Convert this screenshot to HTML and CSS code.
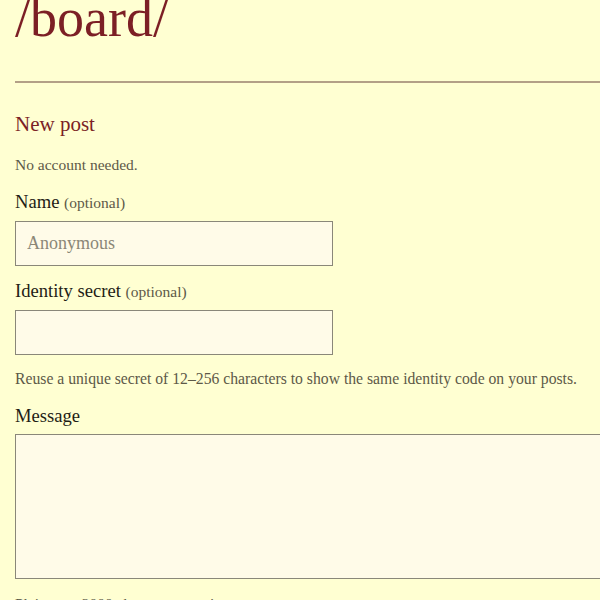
FILE: index.html
```html
<!DOCTYPE html>
<html lang="en">
<head>
<meta charset="utf-8">
<title>/board/</title>
<link rel="stylesheet" href="styles.css">
</head>
<body>
<div class="page">
  <h1 class="board-title">/board/</h1>
  <hr class="rule">
  <form class="post-form">
    <h2 class="form-title">New post</h2>
    <p class="note">No account needed.</p>
    <label class="field">
      <span class="label">Name <span class="optional">(optional)</span></span>
      <input class="text-input" type="text" placeholder="Anonymous">
    </label>
    <label class="field field-identity">
      <span class="label">Identity secret <span class="optional">(optional)</span></span>
      <input class="text-input" type="password">
    </label>
    <p class="note help">Reuse a unique secret of 12–256 characters to show the same identity code on your posts.</p>
    <label class="field field-message">
      <span class="label">Message</span>
      <textarea class="message-input"></textarea>
    </label>
    <p class="note after">Plain text, 2000 characters maximum.</p>
  </form>
</div>
</body>
</html>
```

FILE: styles.css
```css
html, body {
  margin: 0;
  padding: 0;
  background: #ffffd2;
  overflow: hidden;
}

body {
  font-family: "Liberation Serif", "Times New Roman", serif;
  color: #222018;
}

.page {
  padding-left: 15px;
}

.board-title {
  margin: 0;
  font-size: 54px;
  line-height: 37px;
  font-weight: normal;
  color: #7c1f25;
}

.rule {
  margin: 44px 0 0 0;
  border: 0;
  border-top: 2px solid #b3a087;
  height: 0;
}

.post-form {
  display: block;
  margin: 0;
}

.form-title {
  margin: 29px 0 0 0;
  font-size: 21px;
  line-height: 24px;
  font-weight: normal;
  color: #7c1f25;
}

.note {
  margin: 19px 0 0 0;
  font-size: 15.5px;
  line-height: 20px;
  color: #5d5948;
}

.field {
  display: flex;
  flex-direction: column;
  gap: 7px;
  margin-top: 16px;
}

.field-identity {
  margin-top: 14px;
}

.label {
  font-size: 18.6px;
  line-height: 22px;
  color: #1f1d16;
}

.optional {
  font-size: 15.5px;
  color: #5d5948;
}

.text-input {
  box-sizing: border-box;
  width: 318px;
  height: 45px;
  margin: 0;
  padding: 0 11px;
  border: 1px solid #8a8779;
  border-radius: 0;
  background: #fffbe8;
  font-family: "Liberation Serif", "Times New Roman", serif;
  font-size: 18px;
  color: #222018;
  outline: none;
}

.text-input::placeholder {
  color: #8b8777;
  opacity: 1;
}

.help {
  margin-top: 14px;
  font-size: 15.7px;
}

.field-message {
  margin-top: 16px;
}

.message-input {
  box-sizing: border-box;
  width: 640px;
  height: 145px;
  margin: 0;
  padding: 8px 11px;
  border: 1px solid #8a8779;
  border-radius: 0;
  background: #fffbe8;
  font-family: "Liberation Serif", "Times New Roman", serif;
  font-size: 18px;
  resize: none;
  outline: none;
}

.after {
  margin-top: 15px;
}
```
